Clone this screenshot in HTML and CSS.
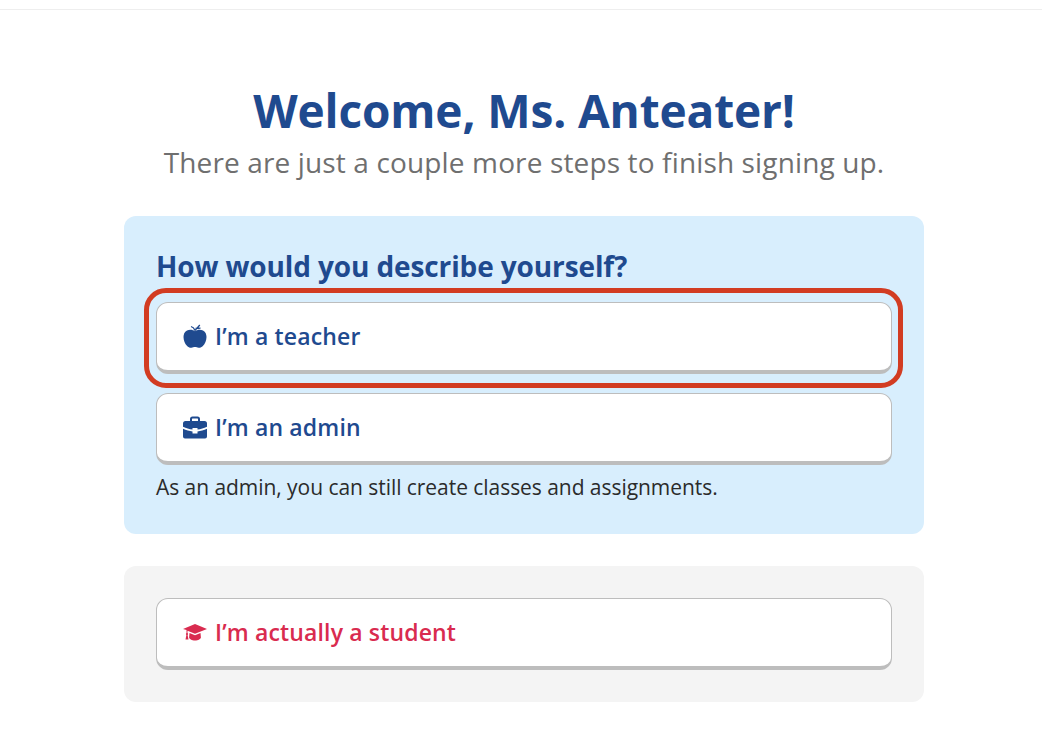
FILE: index.html
```html
<!DOCTYPE html>
<html lang="en">
<head>
<meta charset="utf-8">
<title>Welcome</title>
<link rel="stylesheet" href="styles.css">
</head>
<body>
<div class="topbar"></div>
<main class="page">
  <header class="intro">
    <h1 class="title">Welcome, Ms. Anteater!</h1>
    <p class="subtitle">There are just a couple more steps to finish signing up.</p>
  </header>
  <section class="card card-blue">
    <h2 class="question">How would you describe yourself?</h2>
    <div class="choices">
      <div class="highlighted">
        <button class="choice" type="button">
          <svg class="icon" viewBox="0 0 24 24" aria-hidden="true"><path fill="currentColor" d="M12 7.200C9.800 5.600 6.600 5.200 4 6.500 1.300 7.900.5 10.500.5 13c0 3.500 1.500 6.800 3.600 9 1.300 1.300 2.900 2 4.300 1.800 1.400-.2 2.300-.8 3.600-.8s2.200.6 3.600.8c1.400.2 3-.5 4.300-1.800 2.100-2.200 3.600-5.500 3.600-9 0-2.500-.8-5.100-3.500-6.500-2.600-1.300-5.800-.9-8 .7z"/><path fill="none" stroke="currentColor" stroke-width="1.300" d="M12 6.500C11.300 4.500 9.600 3 8 2.500M12 6.500l4.800-5.500M12.500 4.500c1.700-.3 3.400-.3 5-.3"/></svg>
          <span>I’m a teacher</span>
        </button>
      </div>
      <button class="choice" type="button">
        <svg class="icon" viewBox="0 0 24 24" aria-hidden="true"><path fill="currentColor" fill-rule="evenodd" d="M7 4A2.500 2.500 0 0 1 9.500 1.500h5A2.500 2.500 0 0 1 17 4v2.500h-2V4a.5.5 0 0 0-.5-.5h-5a.5.5 0 0 0-.5.5v2.500H7z"/><path fill="currentColor" d="M2.500 6h19A2.500 2.500 0 0 1 24 8.500v3.300c-3 1.500-6.500 2.500-9.500 2.800V13h-5v1.600c-3-.3-6.500-1.300-9.500-2.800V8.500A2.500 2.500 0 0 1 2.500 6z"/><path fill="currentColor" d="M0 13.800c3 1.400 6.500 2.400 9.500 2.700V18.500h5v-2c3-.3 6.500-1.300 9.500-2.700V21.500a2 2 0 0 1-2 2H2a2 2 0 0 1-2-2z"/></svg>
        <span>I’m an admin</span>
      </button>
    </div>
    <p class="note">As an admin, you can still create classes and assignments.</p>
  </section>
  <section class="card card-gray">
    <button class="choice choice-student" type="button">
      <svg class="icon" viewBox="0 0 24 24" aria-hidden="true"><path fill="currentColor" d="M12 4 24 9l-12 4.700-7.500-3v2.200c.4.300.6.700.6 1.100 0 .4-.2.800-.5 1l.9 4.500H2.500l.9-4.500c-.3-.2-.5-.6-.5-1 0-.4.200-.8.600-1.100v-3L0 9z"/><path fill="currentColor" d="M6.500 13 12 15.200l5.500-2.200.4 4.500c0 1.500-2.700 3-5.900 3s-5.900-1.500-5.900-3z"/></svg>
      <span>I’m actually a student</span>
    </button>
  </section>
</main>
</body>
</html>
```
FILE: styles.css
```css
* { box-sizing: border-box; }
html, body { margin: 0; padding: 0; background: #fff; }
body { font-family: "Open Sans", Lato, sans-serif; overflow: hidden; height: 750px; }
.topbar { height: 10px; border-bottom: 1px solid #eeeeee; }
.page { width: 800px; margin-left: 124px; padding-top: 67px; }
.intro { text-align: center; height: 139px; }
.title { margin: 0; font-size: 46px; line-height: 66px; font-weight: 700; letter-spacing: -0.14px; color: #1f4a8f; }
.subtitle { margin: 0; font-size: 28px; line-height: 38px; letter-spacing: 0.14px; color: #6f6f6f; }
.card { border-radius: 12px; padding: 32px; }
.card-blue { background: #d8eefd; height: 318px; padding-top: 30px; }
.card-gray { background: #f4f4f4; margin-top: 32px; height: 136px; }
.question { margin: 0 0 16px; font-size: 28px; line-height: 40px; font-weight: 700; letter-spacing: -0.12px; color: #1f4a8f; }
.choices { display: flex; flex-direction: column; gap: 19px; }
.highlighted { position: relative; }
.highlighted::after {
  content: "";
  position: absolute;
  left: -12px; right: -11px; top: -14px; bottom: -14px;
  border: 5px solid #d23c22;
  border-radius: 22px;
  pointer-events: none;
}
.choice {
  display: flex; align-items: center; gap: 8px;
  width: 100%; height: 72px;
  padding: 0 26px 2px;
  background: #fff;
  border: 1px solid #bdbdbd; border-bottom-width: 4px;
  border-radius: 12px;
  font-family: inherit; font-size: 23px; font-weight: 600; letter-spacing: 0.15px;
  color: #1f4a8f; text-align: left;
}
.choice-student { color: #d92b4f; }
.icon { width: 24px; height: 24px; flex: none; }
.note { margin: 8px 0 0; font-size: 21px; line-height: 28px; letter-spacing: -0.05px; color: #2b2b2b; }
```
